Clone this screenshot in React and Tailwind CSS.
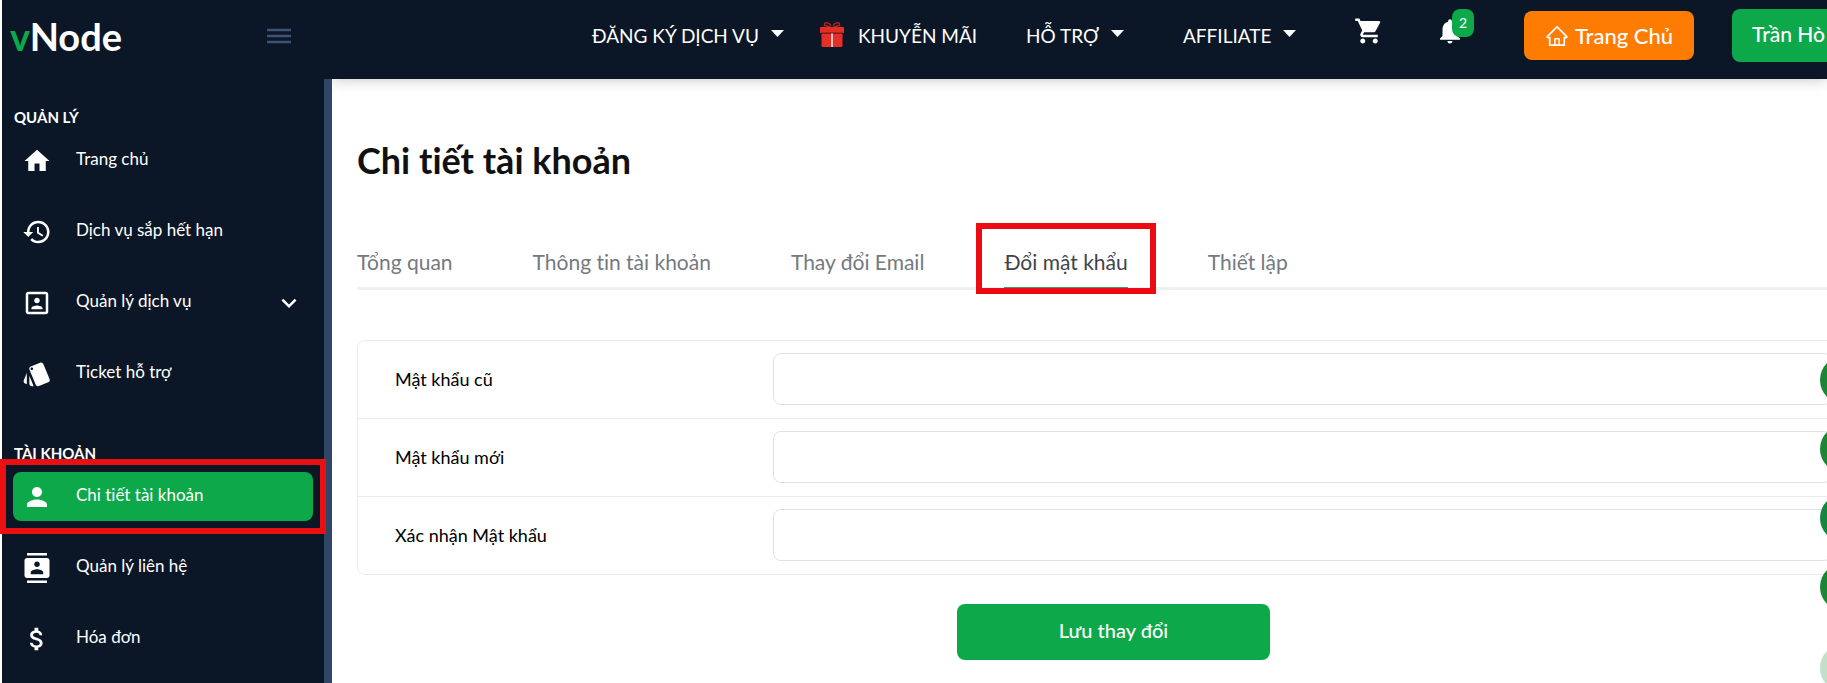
import React, { useState } from 'react';
import { AiOutlineHome } from 'react-icons/ai';
import {
  MdAttachMoney,
  MdContacts,
  MdExpandMore,
  MdHistory,
  MdHome,
  MdNotifications,
  MdPerson,
  MdPortrait,
  MdShoppingCart,
  MdStyle,
} from 'react-icons/md';

const sections = [
  {
    title: 'QUẢN LÝ',
    items: [
      { label: 'Trang chủ', icon: MdHome },
      { label: 'Dịch vụ sắp hết hạn', icon: MdHistory },
      { label: 'Quản lý dịch vụ', icon: MdPortrait, expandable: true },
      { label: 'Ticket hỗ trợ', icon: MdStyle },
    ],
  },
  {
    title: 'TÀI KHOẢN',
    items: [
      { label: 'Chi tiết tài khoản', icon: MdPerson, active: true },
      { label: 'Quản lý liên hệ', icon: MdContacts },
      { label: 'Hóa đơn', icon: MdAttachMoney },
    ],
  },
];

const tabs = ['Tổng quan', 'Thông tin tài khoản', 'Thay đổi Email', 'Đổi mật khẩu', 'Thiết lập'];

const fields = [
  { id: 'old-password', label: 'Mật khẩu cũ' },
  { id: 'new-password', label: 'Mật khẩu mới' },
  { id: 'confirm-password', label: 'Xác nhận Mật khẩu' },
];

const Caret = () => (
  <svg className="w-[13px] h-2 mb-1" viewBox="0 0 13 8" fill="currentColor">
    <path d="M0 0h13L6.500 7z" />
  </svg>
);

const GiftIcon = () => (
  <svg className="w-6 h-[26px] mb-1" viewBox="0 0 24 26">
    <path d="M10.500 5.500C8 5.500 4 5 4.500 3 5 1 9.500 1.500 11 4.500M13.500 5.500c2.500 0 6.500-.5 6-2.500C19 1 14.500 1.500 13 4.500" fill="none" stroke="#b3221d" strokeWidth="1.500" />
    <path d="M1 6h22q1 0 1 1v5H0V7q0-1 1-1z" fill="#e52e25" />
    <path d="M1.500 12.500h21v12Q22.500 26 21 26H3q-1.500 0-1.500-1.500z" fill="#e52e25" />
    <path d="M1.500 11.500h21v1h-21z" fill="#7d1714" />
    <path d="M11 12.500h2V26h-2z" fill="#f3c4c1" />
  </svg>
);

const SidebarItem = ({ item }) => {
  const Icon = item.icon;
  return (
    <li className="relative">
      <a
        href="#"
        className={`flex items-center h-[49px] px-[9px] rounded-lg text-[17px] text-white ${item.active ? 'bg-[#0da84a]' : ''}`}
      >
        <Icon className="size-[30px] shrink-0" />
        <span className="flex-1 pl-6 pb-1">{item.label}</span>
        {item.expandable && <MdExpandMore className="size-[30px]" stroke="currentColor" />}
      </a>
      {item.active && <div className="absolute -inset-[13px] border-6 border-[#e81010] pointer-events-none"></div>}
    </li>
  );
};

const Sidebar = () => (
  <aside className="relative z-10 flex w-[332px] shrink-0 border-l-2 border-white">
    <div className="flex-1 bg-[#0b1726]">
      <div className="flex items-center justify-between h-[79px] pl-2 pr-[33px] pb-2">
        <a href="#" className="text-[38px] leading-10 font-bold text-white">
          <span className="text-[#0da84a]">v</span>Node
        </a>
        <button type="button" aria-label="Menu" className="text-[#3c5276]">
          <svg className="w-6 h-4" viewBox="0 0 24 16" stroke="currentColor" strokeWidth="2.500">
            <path d="M0 2h24M0 8h24M0 14h24" />
          </svg>
        </button>
      </div>
      <nav className="flex flex-col gap-11 pt-[27px] px-[11px]">
        {sections.map((section) => (
          <div key={section.title}>
            <h2 className="pl-[1px] mb-2 text-[15px] leading-[22px] font-bold text-white">{section.title}</h2>
            <ul className="flex flex-col gap-[22px]">
              {section.items.map((item) => (
                <SidebarItem key={item.label} item={item} />
              ))}
            </ul>
          </div>
        ))}
      </nav>
    </div>
    <div className="w-2 bg-[#0b1726] pt-[79px]">
      <div className="h-full bg-[#2f4666]"></div>
    </div>
  </aside>
);

const Header = () => (
  <header className="flex items-start h-[79px] pl-[260px] bg-[#0b1726] text-white text-[19px] whitespace-nowrap shadow-[0_2px_12px_rgba(0,0,0,0.2)]">
    <nav className="flex items-center h-[72px]">
      <button type="button" className="flex items-center gap-3 w-[228px]">
        ĐĂNG KÝ DỊCH VỤ <Caret />
      </button>
      <a href="#" className="flex items-center gap-[14px] w-[206px]">
        <GiftIcon /> KHUYỄN MÃI
      </a>
      <button type="button" className="flex items-center gap-3 w-[157px]">
        HỖ TRỢ <Caret />
      </button>
      <button type="button" className="flex items-center gap-3 w-[171px]">
        AFFILIATE <Caret />
      </button>
    </nav>
    <a href="#" aria-label="Giỏ hàng" className="w-[81px] pt-4">
      <MdShoppingCart className="size-[30px]" />
    </a>
    <a href="#" aria-label="Thông báo" className="relative w-[89px] pt-4">
      <MdNotifications className="size-[30px]" />
      <span className="absolute left-[17px] top-[9px] w-[22px] h-7 rounded-lg bg-[#0da84a] text-sm leading-7 text-center">2</span>
    </a>
    <button type="button" className="flex items-center justify-center gap-[6px] w-[170px] h-[49px] mt-[11px] mr-[38px] shrink-0 rounded-lg bg-[#ff7c03] text-[22px] font-medium">
      <AiOutlineHome className="size-6" /> Trang Chủ
    </button>
    <button type="button" className="flex-1 h-[53px] mt-[9px] pl-5 pb-1 rounded-l-lg bg-[#0da84a] text-[21px] font-medium text-left">
      Trần Hò
    </button>
  </header>
);

const PasswordForm = () => (
  <form className="-mr-[43px]" onSubmit={(e) => e.preventDefault()}>
    <div className="rounded-lg border border-[#ebebee] divide-y divide-[#ebebee]">
      {fields.map((field) => (
        <div key={field.id} className="flex items-center px-[37px] pt-3 pb-[13px]">
          <label htmlFor={field.id} className="w-[378px] text-lg text-black">
            {field.label}
          </label>
          <input id={field.id} type="password" className="flex-1 h-[52px] px-4 rounded-lg border border-[#dfe1e5]" />
        </div>
      ))}
    </div>
    <button type="submit" className="block w-[313px] h-14 mt-[29px] pb-1 mx-auto rounded-lg bg-[#0da84a] text-xl font-medium text-white">
      Lưu thay đổi
    </button>
  </form>
);

const App = () => {
  const [activeTab, setActiveTab] = useState('Đổi mật khẩu');

  return (
    <div className="flex min-h-screen overflow-hidden bg-white font-['Lato','Noto_Sans',sans-serif] [font-variant-ligatures:none]">
      <Sidebar />
      <div className="relative flex-1 min-w-0">
        <Header />
        <main className="pl-[25px] pt-[59px]">
          <h1 className="text-4xl leading-[44px] font-bold text-[#111]">Chi tiết tài khoản</h1>
          <div className="flex gap-20 h-[108px] mb-[50px] items-end border-b-3 border-[#f0f0f2]">
            {tabs.map((tab) => (
              <button
                key={tab}
                type="button"
                onClick={() => setActiveTab(tab)}
                className={`relative pb-[10px] text-[21px] leading-[30px] ${activeTab === tab ? 'text-[#3f4349] border-b-2 border-[#3f9d6b] -mb-[2px]' : 'text-[#74797f]'}`}
              >
                {tab}
                {activeTab === tab && (
                  <span className="absolute -inset-x-7 -top-6 -bottom-[7px] border-6 border-[#ec0b12] pointer-events-none"></span>
                )}
              </button>
            ))}
          </div>
          <PasswordForm />
        </main>

        {/* Contact shortcuts docked to the right edge */}
        <div className="absolute top-[356px] -right-[41px] flex flex-col gap-[21px]">
          <a href="#" aria-label="Zalo" className="size-12 rounded-full bg-[#1c8536]"></a>
          <a href="#" aria-label="Messenger" className="size-12 rounded-full bg-[#1c8536]"></a>
          <a href="#" aria-label="Telegram" className="size-12 rounded-full bg-[#15853f]"></a>
          <a href="#" aria-label="Hotline" className="size-12 rounded-full bg-[#1c8536]"></a>
          <a href="#" aria-label="Chat" className="size-12 mt-3 rounded-full bg-[#c3dfca]"></a>
        </div>
      </div>
    </div>
  );
};

export default App;
